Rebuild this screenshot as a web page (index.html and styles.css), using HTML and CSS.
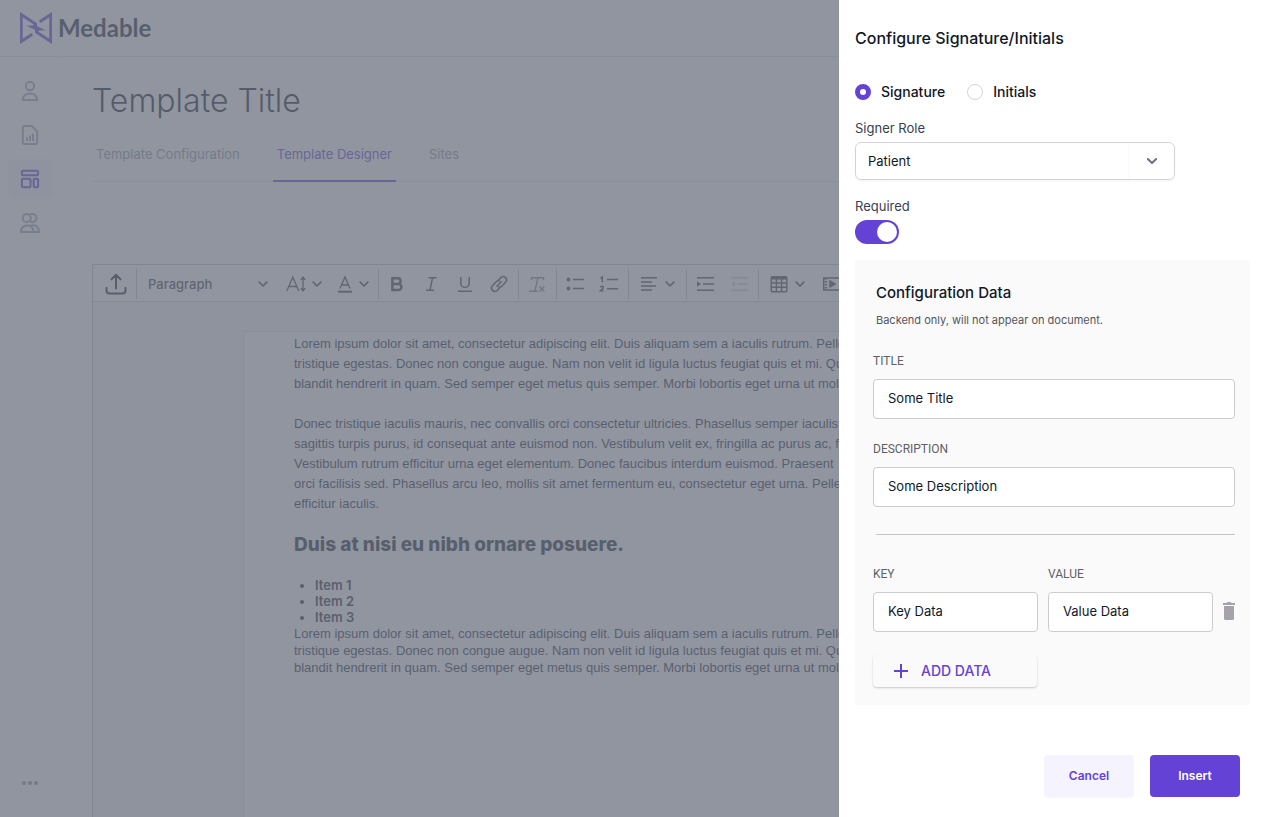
FILE: index.html
```html
<!DOCTYPE html>
<html lang="en">
<head>
<meta charset="utf-8">
<meta name="viewport" content="width=device-width, initial-scale=1">
<title>Medable – Template Designer</title>
<link rel="stylesheet" href="styles.css">
</head>
<body>
<svg class="defs" width="0" height="0" aria-hidden="true">
  <symbol id="chev" viewBox="0 0 10 10"><path d="M1.2 3.2 5 7l3.800-3.800" fill="none" stroke="currentColor" stroke-width="1.700" stroke-linecap="round" stroke-linejoin="round"/></symbol>
</svg>

<div class="app">
  <header class="topbar">
    <a class="brand" href="#">
      <svg width="32" height="32" viewBox="0 0 32 32" aria-hidden="true"><path d="M12.300 22.300 1.300 29.400V2.600L16.300 12.500M19.700 9.700 30.700 2.600V29.400L15.700 19.500" fill="none" stroke="currentColor" stroke-width="2.800"/><path d="M17 11.500v2.800l8.500 3.900-6 .3-4.500 2v-2.800L6.500 13.800l6-.3z" fill="currentColor"/></svg>
      <span class="brand-name">Medable</span>
    </a>
  </header>

  <div class="shell">
    <nav class="sidebar" aria-label="Main">
      <a class="nav-item" href="#" aria-label="Participants"><svg width="20" height="20" viewBox="0 0 20 20"><circle cx="10" cy="5" r="4.200"/><path d="M2.800 19.100c0-4.200 3-6.700 7.200-6.700s7.200 2.500 7.200 6.700z"/></svg></a>
      <a class="nav-item" href="#" aria-label="Reports"><svg width="20" height="20" viewBox="0 0 20 20"><path d="M4.800.9h6.900l5.500 5.600v10.600a2 2 0 0 1-2 2H4.800a2 2 0 0 1-2-2V2.900a2 2 0 0 1 2-2zM7 12.500V16M10 10.500V16M13 8.500V16"/></svg></a>
      <a class="nav-item active" href="#" aria-label="Templates" aria-current="page"><svg width="20" height="20" viewBox="0 0 20 20"><rect x="1.900" y="1.800" width="16.200" height="4.400" rx="1"/><rect x="1.900" y="9.800" width="8.600" height="8.400" rx="1"/><rect x="13.700" y="9.800" width="4.400" height="8.400" rx="1"/></svg></a>
      <a class="nav-item" href="#" aria-label="Team"><svg width="20" height="20" viewBox="0 0 20 20"><circle cx="6.800" cy="5" r="4.100"/><path d="M10.200 1.500A4.100 4.100 0 1 1 10.200 8.500M.9 19.100c0-4.100 2.500-6.700 6.200-6.700s6.400 2.600 6.400 6.700zM9.800 12.800c1-.4 2-.5 3-.5 3.700 0 6.300 2.700 6.300 6.800h-5.600"/></svg></a>
      <button class="nav-item more" type="button" aria-label="More"><svg width="16" height="4" viewBox="0 0 16 4"><circle cx="2" cy="2" r="2"/><circle cx="8" cy="2" r="2"/><circle cx="14" cy="2" r="2"/></svg></button>
    </nav>

    <main class="main">
      <h1 class="page-title">Template Title</h1>
      <div class="tabs">
        <a class="tab" href="#">Template Configuration</a>
        <a class="tab active" href="#" aria-current="true">Template Designer</a>
        <a class="tab" href="#">Sites</a>
      </div>

      <section class="editor">
        <div class="toolbar" role="toolbar" aria-label="Formatting">
          <div class="group">
            <button class="tool upload" type="button" aria-label="Upload"><svg width="22" height="22" viewBox="0 0 22 22" fill="none" stroke="currentColor" stroke-width="2" stroke-linecap="round" stroke-linejoin="round"><path d="M11 15.500V2M6.500 6.200 11 1.700l4.500 4.500M1.500 15v2.500a3 3 0 0 0 3 3h13a3 3 0 0 0 3-3V15"/></svg></button>
          </div>
          <div class="group">
            <button class="tool style-picker" type="button"><span>Paragraph</span><svg class="chev"><use href="#chev"/></svg></button>
            <button class="tool drop" type="button" aria-label="Font size"><svg width="20" height="20" viewBox="0 0 20 20" fill="none" stroke="currentColor" stroke-width="1.300"><path d="M.8 17 6.800 3.200 12.800 17M2.800 12.500h8M17 4v12M14.800 5.800 17 3.300l2.200 2.500M14.800 14.200 17 16.700l2.200-2.500"/></svg><svg class="chev"><use href="#chev"/></svg></button>
            <button class="tool drop narrow" type="button" aria-label="Text color"><svg width="16" height="20" viewBox="0 0 16 20" fill="none" stroke="currentColor" stroke-width="1.300"><path d="M3 14.500 8 3l5 11.500M4.600 11h6.800"/><path d="M1 17.700h14" stroke-width="2"/></svg><svg class="chev"><use href="#chev"/></svg></button>
          </div>
          <div class="group">
            <button class="tool" type="button" aria-label="Bold"><svg width="20" height="20" viewBox="0 0 20 20" fill="none" stroke="currentColor" stroke-width="2.500"><path d="M5.400 4.300h5.400a2.800 2.800 0 0 1 0 5.600H5.400zM5.400 9.900h6a3 3 0 0 1 0 6h-6z"/></svg></button>
            <button class="tool" type="button" aria-label="Italic"><svg width="20" height="20" viewBox="0 0 20 20" fill="none" stroke="currentColor" stroke-width="1.500"><path d="M7.500 3.700h8M5 16.300h8M11.600 3.700 8.900 16.300"/></svg></button>
            <button class="tool" type="button" aria-label="Underline"><svg width="20" height="20" viewBox="0 0 20 20" fill="none" stroke="currentColor" stroke-width="1.500"><path d="M5.800 3v6.200a4.200 4.200 0 0 0 8.400 0V3M3 17.300h14"/></svg></button>
            <button class="tool" type="button" aria-label="Link"><svg width="20" height="20" viewBox="0 0 20 20" fill="none" stroke="currentColor" stroke-width="1.500" stroke-linecap="round"><path d="M7.800 12.300 12.300 7.800M9 6.500l2.800-2.900a3.300 3.300 0 0 1 4.700 4.700l-3.700 3.900a3.300 3.300 0 0 1-3 .9M11 13.500l-2.800 2.900a3.300 3.300 0 0 1-4.700-4.700l3.700-3.900a3.300 3.300 0 0 1 3-.9"/></svg></button>
          </div>
          <div class="group">
            <button class="tool faded" type="button" aria-label="Clear formatting"><svg width="20" height="20" viewBox="0 0 20 20" fill="none" stroke="currentColor" stroke-width="1.500"><path d="M4.500 6V3.700h12V6M11 3.700 8 16.500M2 17.200h9M12.500 12.500l4.800 5M17.300 12.500l-4.800 5"/></svg></button>
          </div>
          <div class="group">
            <button class="tool" type="button" aria-label="Bulleted list"><svg width="20" height="20" viewBox="0 0 20 20" fill="none" stroke="currentColor" stroke-width="1.500"><path d="M8 5.500h11M8 14.500h11"/><circle cx="3.500" cy="5.500" r="1.200" fill="currentColor"/><circle cx="3.500" cy="14.500" r="1.200" fill="currentColor"/></svg></button>
            <button class="tool" type="button" aria-label="Numbered list"><svg width="20" height="20" viewBox="0 0 20 20" fill="none" stroke="currentColor" stroke-width="1.500"><path d="M8 5.500h11M8 14.800h11M1.500 4.300 3.300 3v5.200M1.300 13.300c.3-1.500 3-1.400 3 .1 0 1.200-1.500 1.800-2.900 3.400h3.200"/></svg></button>
          </div>
          <div class="group">
            <button class="tool drop wide" type="button" aria-label="Alignment"><svg width="20" height="20" viewBox="0 0 20 20" fill="none" stroke="currentColor" stroke-width="1.500"><path d="M2 3.800h16M2 7.900h11M2 12h15M2 16.100h11"/></svg><svg class="chev"><use href="#chev"/></svg></button>
          </div>
          <div class="group">
            <button class="tool" type="button" aria-label="Increase indent"><svg width="20" height="20" viewBox="0 0 20 20" fill="none" stroke="currentColor" stroke-width="1.500"><path d="M2 3.800h17M8 10h11M2 16.200h17"/><path d="M2 7.200 6 10l-4 2.800z" fill="currentColor" stroke="none"/></svg></button>
            <button class="tool disabled" type="button" aria-label="Decrease indent"><svg width="20" height="20" viewBox="0 0 20 20" fill="none" stroke="currentColor" stroke-width="1.500"><path d="M2 3.800h17M8 10h11M2 16.200h17"/><path d="M6 7.200 2 10l4 2.800z" fill="currentColor" stroke="none"/></svg></button>
          </div>
          <div class="group">
            <button class="tool drop wide" type="button" aria-label="Table"><svg width="20" height="20" viewBox="0 0 20 20" fill="none" stroke="currentColor" stroke-width="1.400"><rect x="2.200" y="2.700" width="15.600" height="15" rx="1"/><path d="M2 4.300h16" stroke-width="2.500"/><path d="M2 9h16M2 13.300h16M7.400 5v13M12.600 5v13"/></svg><svg class="chev"><use href="#chev"/></svg></button>
            <button class="tool" type="button" aria-label="Media"><svg width="20" height="20" viewBox="0 0 20 20" fill="none" stroke="currentColor" stroke-width="1.500"><rect x="2.700" y="4" width="16.500" height="12"/><path d="M5 4v12" stroke-dasharray="1.500 1.500" stroke-width="2.500"/><path d="m9 7 5 3-5 3z" fill="currentColor"/></svg></button>
          </div>
        </div>

        <div class="canvas">
          <article class="paper">
            <p>Lorem ipsum dolor sit amet, consectetur adipiscing elit. Duis aliquam sem a iaculis rutrum. Pellent
tristique egestas. Donec non congue augue. Nam non velit id ligula luctus feugiat quis et mi. Quis
blandit hendrerit in quam. Sed semper eget metus quis semper. Morbi lobortis eget urna ut mollis</p>
            <p>Donec tristique iaculis mauris, nec convallis orci consectetur ultricies. Phasellus semper iaculis
sagittis turpis purus, id consequat ante euismod non. Vestibulum velit ex, fringilla ac purus ac, fauci
Vestibulum rutrum efficitur urna eget elementum. Donec faucibus interdum euismod. Praesent
orci facilisis sed. Phasellus arcu leo, mollis sit amet fermentum eu, consectetur eget urna. Pellent
efficitur iaculis.</p>
            <h2>Duis at nisi eu nibh ornare posuere.</h2>
            <ul>
              <li>Item 1</li>
              <li>Item 2</li>
              <li>Item 3</li>
            </ul>
            <p class="tight">Lorem ipsum dolor sit amet, consectetur adipiscing elit. Duis aliquam sem a iaculis rutrum. Pellent
tristique egestas. Donec non congue augue. Nam non velit id ligula luctus feugiat quis et mi. Quis
blandit hendrerit in quam. Sed semper eget metus quis semper. Morbi lobortis eget urna ut mollis</p>
          </article>
        </div>
      </section>
    </main>
  </div>
</div>

<div class="overlay">
  <form class="drawer" aria-labelledby="drawer-title">
    <h2 class="drawer-title" id="drawer-title">Configure Signature/Initials</h2>

    <div class="radios">
      <label class="radio"><input type="radio" name="kind" checked><span>Signature</span></label>
      <label class="radio"><input type="radio" name="kind"><span>Initials</span></label>
    </div>

    <label class="label" for="role">Signer Role</label>
    <div class="select">
      <select id="role"><option>Patient</option></select>
      <span class="select-arrow"><svg width="12" height="12" viewBox="0 0 12 12" aria-hidden="true"><path d="m1.800 4 4.200 4 4.200-4" fill="none" stroke="currentColor" stroke-width="2" stroke-linecap="round" stroke-linejoin="round"/></svg></span>
    </div>

    <label class="label" for="required">Required</label>
    <input class="toggle" id="required" type="checkbox" role="switch" checked>

    <section class="panel">
      <h3 class="panel-title">Configuration Data</h3>
      <p class="panel-note">Backend only, will not appear on document.</p>
      <div class="field">
        <label for="title">TITLE</label>
        <input id="title" type="text" value="Some Title">
      </div>
      <div class="field">
        <label for="desc">DESCRIPTION</label>
        <input id="desc" type="text" value="Some Description">
      </div>
      <hr>
      <div class="pair">
        <div class="field">
          <label for="key">KEY</label>
          <input id="key" type="text" value="Key Data">
        </div>
        <div class="field">
          <label for="value">VALUE</label>
          <input id="value" type="text" value="Value Data">
        </div>
        <button class="trash" type="button" aria-label="Delete row"><svg width="12" height="18" viewBox="0 0 12 18" aria-hidden="true"><path d="M0 1h3.500l.8-1h3.400l.8 1H12v2H0zM1 4h10v12.500A1.500 1.500 0 0 1 9.500 18h-7A1.500 1.500 0 0 1 1 16.500z" fill="currentColor"/></svg></button>
      </div>
      <button class="add" type="button"><svg width="14" height="14" viewBox="0 0 14 14" aria-hidden="true"><path d="M7 0v14M0 7h14" stroke="currentColor" stroke-width="2"/></svg>ADD DATA</button>
    </section>

    <div class="actions">
      <button class="btn ghost" type="button">Cancel</button>
      <button class="btn primary" type="submit">Insert</button>
    </div>
  </form>
</div>
</body>
</html>
```
FILE: styles.css
```css
* { box-sizing: border-box; }

body {
  margin: 0;
  font: 400 13px/20px Inter, "Liberation Sans", sans-serif;
  color: #111827;
  background: #fff;
}

h1, h2, h3, p, ul { margin: 0; padding: 0; }
a { color: inherit; text-decoration: none; }
button { font: inherit; color: inherit; background: none; border: 0; padding: 0; }
svg { display: block; flex: none; }
.defs { position: absolute; }

.app {
  display: flex;
  flex-direction: column;
  height: 100vh;
  overflow: hidden;
}

.topbar {
  display: flex;
  align-items: center;
  flex: none;
  height: 57px;
  padding: 0 20px;
  border-bottom: 1px solid #e0e4ee;
}
.brand { display: flex; align-items: center; gap: 6px; color: #6442d6; }
.brand-name { font: 700 24px/32px Lato, Inter, sans-serif; color: #1f2937; }

.shell { display: flex; flex: 1; min-height: 0; }

.sidebar {
  display: flex;
  flex-direction: column;
  gap: 4px;
  width: 61px;
  flex: none;
  padding: 14px 8px;
  border-right: 1px solid #f9fafb;
}
.nav-item {
  display: flex;
  align-items: center;
  justify-content: center;
  height: 40px;
  border-radius: 6px;
  color: #9ca3af;
}
.nav-item svg { fill: none; stroke: currentColor; stroke-width: 2; }
.nav-item.active { color: #6442d6; background: #f7f7f9; }
.nav-item.more { margin-top: auto; color: #8b90a0; }
.nav-item.more svg { fill: currentColor; stroke: none; }

.main {
  display: flex;
  flex-direction: column;
  flex: 1;
  min-width: 0;
  padding: 22px 0 0 31px;
}
.page-title { font-size: 32px; line-height: 44px; font-weight: 300; }

.tabs { display: flex; gap: 29px; margin-top: 6px; border-bottom: 1px solid #e5e7eb; }
.tab {
  padding: 15px 4px 16px;
  margin-bottom: -1px;
  border-bottom: 2px solid transparent;
  color: #8f96a3;
}
.tab.active { color: #6442d6; border-color: #6442d6; }

.editor {
  display: flex;
  flex-direction: column;
  flex: 1;
  min-height: 0;
  margin-top: 82px;
  border: 1px solid #c4c4c8;
  border-bottom: 0;
}
.toolbar {
  display: flex;
  flex: none;
  height: 37px;
  padding: 4px 0 2px;
  border-bottom: 1px solid #d4d4d8;
  color: #444;
}
.group { display: flex; padding: 0 2px 0 1px; border-right: 1px solid #c4c4c4; }
.group:last-child { border: 0; }
.tool { display: flex; align-items: center; justify-content: center; width: 34px; }
.upload { width: 40px; padding-left: 3px; color: #1f2937; }
.style-picker {
  width: 140px;
  justify-content: space-between;
  padding: 0 10px;
  font-weight: 500;
}
.drop { width: 52px; gap: 6px; }
.narrow { width: 46px; }
.wide { width: 54px; }
.chev { width: 10px; height: 10px; }
.faded { color: #888; }
.disabled { color: #ccc; }

.canvas { display: flex; flex: 1; min-height: 0; padding: 29px 150px 0; background: #f5f5f5; }
.paper {
  flex: 1;
  min-width: 0;
  padding: 2px 50px 0;
  border: 1px solid #e0e0e4;
  border-bottom: 0;
  background: #fff;
  overflow: hidden;
  font-family: "Liberation Sans", sans-serif;
  color: #1f2937;
}
.paper p { white-space: pre; margin-bottom: 20px; }
.paper h2 { font: 800 19px/22px Inter, sans-serif; margin-bottom: 21px; }
.paper ul { padding-left: 21px; font: 600 13px/16px Inter, sans-serif; }
.paper .tight { line-height: 17px; }

.overlay {
  position: fixed;
  inset: 0;
  display: flex;
  justify-content: flex-end;
  background: rgba(107, 114, 128, 0.75);
}
.drawer {
  display: flex;
  flex-direction: column;
  align-items: flex-start;
  width: 441px;
  max-width: 100%;
  padding: 26px 30px 20px 16px;
  background: #fff;
  overflow: auto;
}
.drawer-title { font-size: 16px; line-height: 24px; font-weight: 500; }

.radios { display: flex; gap: 22px; margin-top: 32px; }
.radio { display: flex; align-items: center; gap: 10px; font-size: 14px; font-weight: 500; }
.radio input {
  appearance: none;
  width: 16px;
  height: 16px;
  margin: 0;
  border: 1px solid #d1d5db;
  border-radius: 50%;
  background: #fff;
}
.radio input:checked { border: 5px solid #6442d6; }

.label { margin-top: 16px; color: #374151; }
.select {
  display: flex;
  width: 320px;
  max-width: 100%;
  height: 38px;
  margin-top: 4px;
  border: 1px solid #d1d5db;
  border-radius: 6px;
  box-shadow: 0 1px 2px rgba(0, 0, 0, 0.05);
}
.select select {
  appearance: none;
  flex: 1;
  padding: 0 12px;
  border: 0;
  background: none;
  font: inherit;
  color: inherit;
}
.select-arrow {
  display: flex;
  align-items: center;
  justify-content: center;
  width: 46px;
  border-left: 1px solid #fafafa;
  color: #6b7280;
}

.toggle {
  appearance: none;
  display: flex;
  justify-content: flex-end;
  width: 44px;
  height: 24px;
  margin: 4px 0 0;
  padding: 2px;
  border-radius: 12px;
  background: #6442d6;
}
.toggle::before { content: ""; width: 20px; height: 20px; border-radius: 50%; background: #fff; }

.panel { align-self: stretch; margin-top: 16px; padding: 22px 15px 18px 18px; background: #fafafa; }
.panel-title { padding-left: 3px; font-size: 15px; line-height: 22px; font-weight: 500; }
.panel-note { padding-left: 3px; margin-top: 8px; font-size: 11px; line-height: 16px; color: #55555c; }
.field { display: flex; flex-direction: column; gap: 10px; margin-top: 25px; min-width: 0; }
.field label { font: 400 12px/16px Roboto, sans-serif; color: #5f5f66; }
.field input {
  width: 100%;
  height: 40px;
  padding: 0 14px 2px;
  border: 1px solid #ccc;
  border-radius: 4px;
  background: #fff;
  font: inherit;
  color: inherit;
}
.field + .field { margin-top: 22px; }
.panel hr { margin: 27px 0 31px 3px; border: 0; border-top: 1px solid #c4c4c4; }
.pair { display: grid; grid-template-columns: 1fr 1fr 12px; gap: 10px; align-items: end; }
.pair .field { margin-top: 0; }
.trash { display: flex; align-items: center; height: 38px; margin-bottom: 2px; color: #a5a3a9; }
.add {
  display: flex;
  align-items: center;
  gap: 13px;
  width: 164px;
  height: 32px;
  margin-top: 23px;
  padding: 0 21px;
  border-radius: 4px;
  font-size: 14px;
  font-weight: 500;
  color: #6442d6;
  box-shadow: 0 1px 2px rgba(0, 0, 0, 0.2);
}

.actions { display: flex; gap: 16px; align-self: flex-end; margin: auto 10px 0 0; }
.btn { width: 90px; height: 42px; border-radius: 4px; font-size: 12px; font-weight: 600; }
.ghost { color: #6442d6; background: #f5f3fe; box-shadow: 0 1px 1px rgba(0, 0, 0, 0.03); }
.primary { color: #fff; background: #6442d6; }
```
